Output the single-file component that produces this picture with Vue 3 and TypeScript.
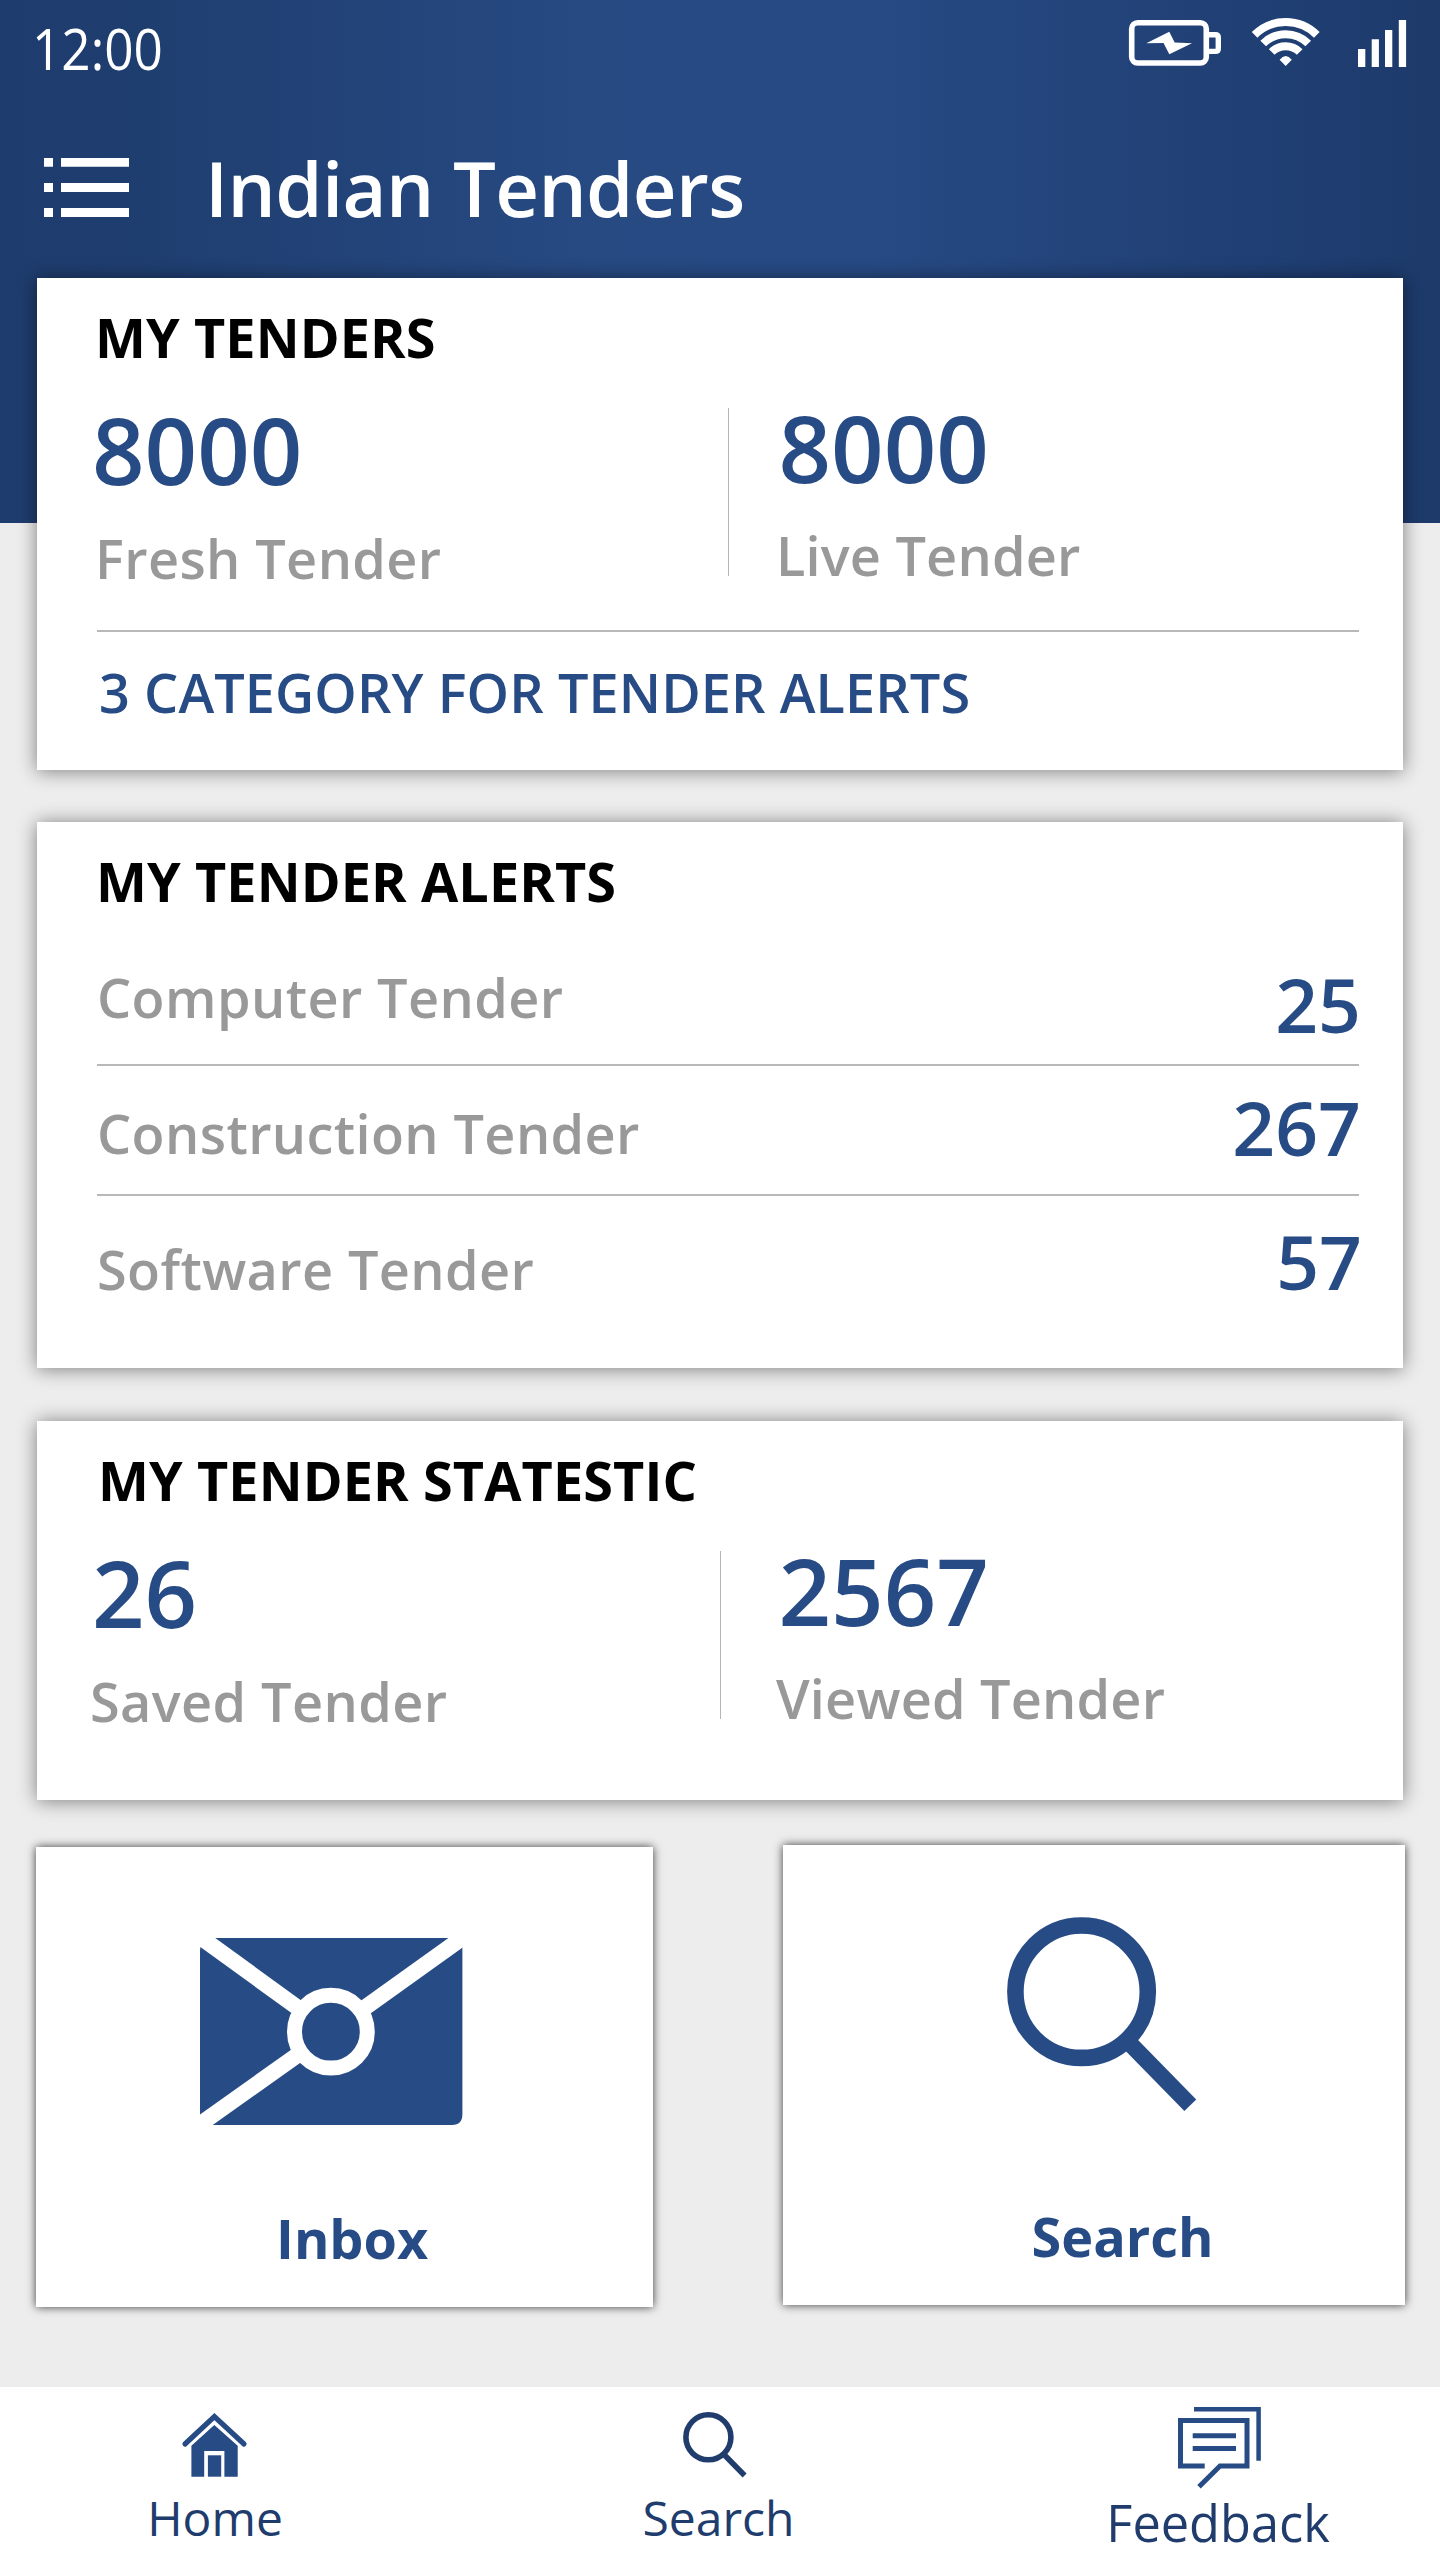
<script setup lang="ts">
interface Stat {
  value: string
  label: string
}
interface Alert {
  label: string
  count: number
}

const tenders: Stat[] = [
  { value: '8000', label: 'Fresh Tender' },
  { value: '8000', label: 'Live Tender' },
]
const alerts: Alert[] = [
  { label: 'Computer Tender', count: 25 },
  { label: 'Construction Tender', count: 267 },
  { label: 'Software Tender', count: 57 },
]
const statistics: Stat[] = [
  { value: '26', label: 'Saved Tender' },
  { value: '2567', label: 'Viewed Tender' },
]
</script>

<template>
  <div class="screen">
    <header class="header">
      <div class="status">
        <span class="clock">12:00</span>
        <svg class="status-icons" width="284" height="70" viewBox="1126 0 284 70">
          <rect x="1131.7" y="22.8" width="74.6" height="40.2" rx="6" fill="none" stroke="#fff" stroke-width="5.6" />
          <path d="M1207 34.8H1215.5Q1218.3 34.8 1218.3 37.6V48.6Q1218.3 51.4 1215.5 51.4H1207" fill="none" stroke="#fff" stroke-width="5.4" />
          <path d="M1146.3 43.3L1169.3 31.7L1174.7 42.5L1192 43.3L1169.3 54.3L1163.5 43Z" fill="#fff" />
          <g fill="none" stroke="#fff" stroke-width="8">
            <path d="M1254.6 34.9A44 44 0 0 1 1316.8 34.9" />
            <path d="M1263.2 43.5A31.8 31.8 0 0 1 1308.2 43.5" />
            <path d="M1271.7 52A19.8 19.8 0 0 1 1299.7 52" />
          </g>
          <path d="M1285.7 66L1279.6 59.8Q1285.7 52.4 1291.8 59.8Z" fill="#fff" />
          <path d="M1358 49h7.3v18h-7.3zM1371.7 39.3h7.2v27.7h-7.2zM1385 30h7.3v37h-7.3zM1398.8 20h7.3v47h-7.3z" fill="#fff" />
        </svg>
      </div>
      <div class="bar">
        <svg class="menu" width="86" height="60" viewBox="0 0 86 60" fill="#fff">
          <path d="M0 0h9v8.7H0zM17 0h68v8.7H17zM0 25h9v9H0zM17 25h68v9H17zM0 50h9v9H0zM17 50h68v9H17z" />
        </svg>
        <h1 class="title">Indian Tenders</h1>
      </div>
    </header>

    <main class="content">
      <section class="card tenders">
        <h2 class="heading">MY TENDERS</h2>
        <div class="stats">
          <div v-for="(s, i) in tenders" :key="s.label" class="stat" :class="{ second: i === 1 }">
            <div class="value">{{ s.value }}</div>
            <div class="label">{{ s.label }}</div>
          </div>
        </div>
        <div class="category">3 CATEGORY FOR TENDER ALERTS</div>
      </section>

      <section class="card alerts">
        <h2 class="heading">MY TENDER ALERTS</h2>
        <div v-for="a in alerts" :key="a.label" class="alert">
          <span class="label">{{ a.label }}</span>
          <span class="count">{{ a.count }}</span>
        </div>
      </section>

      <section class="card statistic">
        <h2 class="heading">MY TENDER STATESTIC</h2>
        <div class="stats">
          <div v-for="(s, i) in statistics" :key="s.label" class="stat" :class="{ second: i === 1 }">
            <div class="value">{{ s.value }}</div>
            <div class="label">{{ s.label }}</div>
          </div>
        </div>
      </section>

      <div class="tiles">
        <section class="tile inbox">
          <svg width="263" height="187" viewBox="0 0 263 187">
            <path d="M4 0H262.4V176Q262.4 187 252 187H0V12Q1 4 4 0Z" fill="#274b85" />
            <g stroke="#fff" stroke-width="16">
              <path d="M-13.8 -11.2L100 71.4" />
              <path d="M276 -9.9L162 71.7" />
              <path d="M-13.8 196L100 115.2" />
            </g>
            <circle cx="130.9" cy="93.7" r="36.4" fill="#274b85" stroke="#fff" stroke-width="15" />
          </svg>
          <div class="tile-label">Inbox</div>
        </section>
        <section class="tile search">
          <svg width="190" height="196" viewBox="0 0 190 196" fill="none" stroke="#274b85">
            <circle cx="74.6" cy="74.7" r="66.2" stroke-width="16.6" />
            <path d="M118 121.5L183.3 188.3" stroke-width="16.6" />
          </svg>
          <div class="tile-label">Search</div>
        </section>
      </div>
    </main>

    <nav class="nav">
      <a class="nav-item home">
        <svg width="100" height="90" viewBox="0 0 100 90">
          <path d="M19 43L48.4 15.5L78 43" fill="none" stroke="#274b85" stroke-width="5.2" stroke-linecap="round" />
          <path d="M48.3 24L71.7 44.7V75.7H58.4V50H38.2V75.7H25.4V44.7Z" fill="#274b85" />
          <path d="M41.9 54.3h13.3v21.4h-13.3z" fill="#274b85" />
        </svg>
        <span>Home</span>
      </a>
      <a class="nav-item find">
        <svg width="100" height="90" viewBox="0 0 100 90" fill="none" stroke="#203c6c" stroke-width="5.6">
          <circle cx="41.4" cy="36.3" r="22.5" />
          <path d="M57 53.5L77.6 74.5" />
        </svg>
        <span>Search</span>
      </a>
      <a class="nav-item feedback">
        <svg width="100" height="90" viewBox="0 0 100 90" fill="none" stroke="#274b85" stroke-width="5">
          <path d="M25 8.2H89.6V59.7" stroke-width="4.5" />
          <path d="M35.7 65H11.5V19.4H78V65H51L30 85.7" />
          <path d="M23.7 34.7H67M23.7 47.4H67" />
        </svg>
        <span>Feedback</span>
      </a>
    </nav>
  </div>
</template>

<style>
body {
  margin: 0;
}
</style>

<style scoped>
.screen {
  width: 1440px;
  height: 2560px;
  display: flex;
  flex-direction: column;
  background: #ededed;
  font-family: "Open Sans", "Noto Sans", sans-serif;
  overflow: hidden;
}
.header {
  height: 523px;
  flex: none;
  background: linear-gradient(90deg, #1e3c6d 0%, #1f3e70 10%, #274a83 42%, #274a84 60%, #1f3e72 90%, #1d3a6a 100%);
  color: #fff;
}
.status {
  height: 100px;
  display: flex;
  justify-content: space-between;
}
.clock {
  margin: 11px 0 0 32px;
  font-size: 57px;
  line-height: 74px;
  height: 74px;
  font-weight: 450;
  transform: scaleX(0.9);
  transform-origin: left;
}
.status-icons {
  margin-right: 30px;
}
.bar {
  display: flex;
  padding-left: 44px;
}
.menu {
  margin-top: 58px;
}
.title {
  margin: 38px 0 0 75px;
  font-size: 76px;
  line-height: 100px;
  font-weight: 600;
  letter-spacing: -0.6px;
}
.content {
  margin-top: -245px;
  flex: none;
  height: 2109px;
}
.card {
  box-sizing: border-box;
  width: 1366px;
  margin-left: 37px;
  padding: 29px 44px 0 60px;
  background: #fff;
  box-shadow: 0 1px 18px rgba(0, 0, 0, 0.48);
}
.tenders {
  height: 492px;
}
.alerts {
  height: 546px;
  margin-top: 52px;
}
.statistic {
  height: 379px;
  margin-top: 53px;
}
.heading {
  margin: 0 0 0 -2px;
  font-size: 54px;
  line-height: 60px;
  font-weight: 700;
  letter-spacing: 0.1px;
  color: #000;
}
.alerts .heading {
  margin: 0 0 1px -1px;
}
.statistic .heading {
  margin-left: 1px;
}
.stats {
  display: grid;
  grid-template-columns: 631px 1fr;
  height: 263px;
}
.statistic .stats {
  grid-template-columns: 623px 1fr;
}
.value {
  margin: 33px 0 0 -5px;
  font-size: 92px;
  line-height: 100px;
  font-weight: 600;
  color: #274b85;
}
.label {
  font-size: 54px;
  line-height: 60px;
  font-weight: 600;
  letter-spacing: 0.4px;
  color: #999;
}
.stat .label {
  margin: 28px 0 0 -2px;
}
.statistic .stat .label {
  margin-left: -7px;
}
.second {
  margin-top: 41px;
  height: 168px;
  border-left: 1px solid #b5b5b5;
  padding-left: 48px;
}
.statistic .second {
  padding-left: 56px;
}
.second .value {
  margin: -10px 0 0 1.5px;
}
.second .label,
.statistic .second .label {
  margin: 27px 0 0 -1px;
  letter-spacing: 0.2px;
}
.category {
  border-top: 2px solid #b8b8b8;
  padding: 30px 0 0 2px;
  font-size: 54px;
  line-height: 60px;
  font-weight: 600;
  letter-spacing: 0.1px;
  color: #274b85;
}
.alert {
  box-sizing: border-box;
  display: flex;
  justify-content: space-between;
  height: 154px;
  border-bottom: 2px solid #b8b8b8;
}
.alert .label {
  padding-top: 55px;
}
.count {
  margin-right: -2px;
  padding-top: 52px;
  font-size: 75px;
  line-height: 80px;
  font-weight: 600;
  color: #274b85;
}
.alert:nth-of-type(2) {
  height: 130px;
}
.alert:nth-of-type(2) .label {
  padding-top: 37px;
}
.alert:nth-of-type(2) .count {
  padding-top: 21px;
}
.alert:nth-of-type(3) {
  border: 0;
}
.alert:nth-of-type(3) .label {
  padding-top: 43px;
}
.alert:nth-of-type(3) .count {
  margin-right: -3px;
  padding-top: 25px;
}
.tiles {
  display: flex;
  margin: 45px 35px 0 36px;
  justify-content: space-between;
}
.tile {
  box-sizing: border-box;
  height: 460px;
  background: #fff;
  box-shadow: 0 0 9px rgba(0, 0, 0, 0.75);
}
.tile svg {
  display: block;
}
.inbox {
  width: 617px;
  margin-top: 2px;
  padding: 91px 0 0 164px;
}
.search {
  width: 622px;
  padding: 72px 0 0 223.5px;
}
.tile-label {
  font-size: 54px;
  line-height: 60px;
  font-weight: 700;
  color: #274b85;
}
.inbox .tile-label {
  margin: 83px 0 0 76px;
}
.search .tile-label {
  margin: 93px 0 0 25px;
}
.nav {
  height: 173px;
  display: grid;
  grid-template-columns: 432px 570px 434px;
  background: #fff;
}
.nav-item {
  display: flex;
  flex-direction: column;
  align-items: center;
  padding-top: 14px;
  font-size: 48px;
  line-height: 52px;
  color: #203c6c;
}
.nav-item span {
  margin-top: 1px;
}
.home span {
  margin-right: 2px;
}
.find span {
  margin-left: 3px;
}
.feedback {
  font-size: 50.5px;
}
.feedback span {
  margin: 6px 2px 0 0;
}
</style>
